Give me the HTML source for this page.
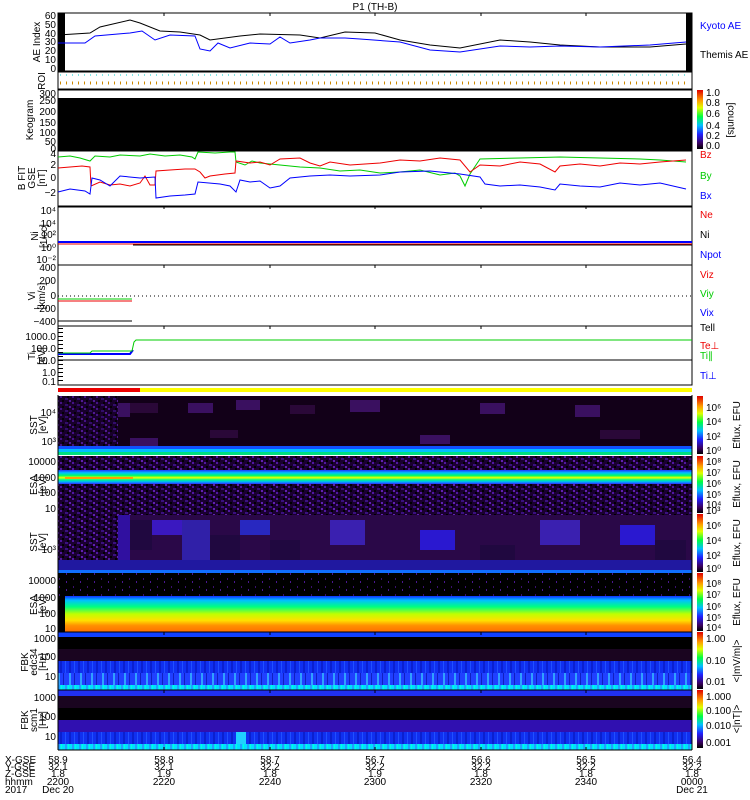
<!DOCTYPE html>
<html><head><meta charset="utf-8"><style>
html,body{margin:0;padding:0;background:#fff;width:750px;height:800px;overflow:hidden}
svg{display:block}
text{font-family:"Liberation Sans",sans-serif;font-size:10px}
</style></head><body>
<svg width="750" height="800" viewBox="0 0 750 800" xmlns="http://www.w3.org/2000/svg">
<defs>
<linearGradient id="rb" x1="0" y1="1" x2="0" y2="0">
<stop offset="0" stop-color="#000"/><stop offset="0.1" stop-color="#3a0060"/><stop offset="0.25" stop-color="#2020ff"/><stop offset="0.4" stop-color="#00c0ff"/><stop offset="0.55" stop-color="#00ff40"/><stop offset="0.7" stop-color="#e0ff00"/><stop offset="0.82" stop-color="#ffa000"/><stop offset="1" stop-color="#e00000"/>
</linearGradient>
<linearGradient id="esa2" x1="0" y1="0" x2="0" y2="1">
<stop offset="0" stop-color="#1030ff"/><stop offset="0.12" stop-color="#00c0ff"/><stop offset="0.3" stop-color="#00ff80"/><stop offset="0.5" stop-color="#c0ff00"/><stop offset="0.68" stop-color="#ffe000"/><stop offset="0.82" stop-color="#ff9000"/><stop offset="1" stop-color="#ff7000"/>
</linearGradient>
<linearGradient id="esa1" x1="0" y1="0" x2="0" y2="1">
<stop offset="0" stop-color="#2030ff"/><stop offset="0.2" stop-color="#00c0ff"/><stop offset="0.4" stop-color="#00ff60"/><stop offset="0.55" stop-color="#f0ff00"/><stop offset="0.7" stop-color="#00ff80"/><stop offset="0.85" stop-color="#00b0ff"/><stop offset="1" stop-color="#3030ff"/>
</linearGradient>
<pattern id="noise" width="12" height="6" patternUnits="userSpaceOnUse">
<rect width="12" height="6" fill="#1a0030"/><rect x="0" y="0" width="2" height="2" fill="#5018a0"/><rect x="5" y="2" width="3" height="2" fill="#3a1080"/><rect x="9" y="4" width="2" height="2" fill="#6020b0"/><rect x="2" y="4" width="2" height="2" fill="#000"/><rect x="7" y="0" width="2" height="2" fill="#000"/>
</pattern>
<pattern id="speck" width="14" height="8" patternUnits="userSpaceOnUse">
<rect width="14" height="8" fill="#000"/><rect x="3" y="2" width="1" height="2" fill="#3a1070"/><rect x="10" y="5" width="1" height="2" fill="#4a1890"/>
</pattern>
<pattern id="vstr" width="9" height="10" patternUnits="userSpaceOnUse">
<rect width="9" height="10" fill="#1030f0"/><rect x="2" width="1" height="10" fill="#2050ff"/><rect x="6" width="2" height="10" fill="#0a20d0"/>
</pattern>
<pattern id="vstr2" width="11" height="10" patternUnits="userSpaceOnUse">
<rect width="11" height="10" fill="#2040ff"/><rect x="3" width="2" height="10" fill="#30a0ff"/><rect x="8" width="1" height="10" fill="#1020c0"/>
</pattern>
<pattern id="cyanstr" width="7" height="10" patternUnits="userSpaceOnUse">
<rect width="7" height="10" fill="#00e0ff"/><rect x="2" width="2" height="10" fill="#20a0ff"/><rect x="5" width="1" height="10" fill="#00ffe0"/>
</pattern>
<pattern id="tk" width="10" height="4" patternUnits="userSpaceOnUse">
<rect width="10" height="1" fill="#000"/>
</pattern>
</defs>

<text x="375" y="10" text-anchor="middle" font-size="11">P1 (TH-B)</text>

<!-- AE panel -->
<rect x="58" y="13" width="634" height="58" fill="#fff" stroke="#000"/>
<rect x="58" y="13" width="7" height="58" fill="#000"/>
<rect x="686" y="13" width="6" height="58" fill="#000"/>
<polyline fill="none" stroke="#000" points="58,35 90,33 100,27 130,20 140,23 160,31 180,32 200,35 210,40 240,36 260,34 300,35 320,38 345,32 375,33 400,40 430,45 460,48 500,40 530,42 560,45 600,47 650,47 686,44"/>
<polyline fill="none" stroke="#00f" points="58,43 85,43 95,36 130,33 142,31 155,40 170,35 195,36 200,49 210,51 218,43 230,48 250,43 270,44 280,37 290,43 310,40 320,38 345,38 360,39 400,42 430,50 460,52 500,46 530,47 560,46 600,47 650,45 686,42"/>
<g text-anchor="end" font-size="9"><text x="56" y="19">60</text><text x="56" y="28">50</text><text x="56" y="37">40</text><text x="56" y="45">30</text><text x="56" y="54">20</text><text x="56" y="63">10</text><text x="56" y="72">0</text></g>
<text transform="translate(40,42) rotate(-90)" text-anchor="middle" font-size="9">AE Index</text>
<text x="700" y="29" fill="#00f" font-size="9">Kyoto AE</text>
<text x="700" y="58" font-size="9">Themis AE</text>

<!-- ROI -->
<rect x="58" y="72" width="634" height="17" fill="#fff" stroke="#000"/>
<line x1="60" y1="75" x2="690" y2="75" stroke="#0cc" stroke-dasharray="1,5"/>
<line x1="60" y1="83" x2="690" y2="83" stroke="#c80" stroke-width="3" stroke-dasharray="1,5"/>
<text transform="translate(45,81) rotate(-90)" text-anchor="middle" font-size="8">ROI</text>

<!-- Keogram -->
<rect x="58" y="90" width="634" height="60" fill="#fff" stroke="#000"/>
<rect x="58" y="98" width="634" height="52" fill="#000"/>
<g text-anchor="end" font-size="9"><text x="56" y="97">300</text><text x="56" y="104">250</text><text x="56" y="115">200</text><text x="56" y="126">150</text><text x="56" y="136">100</text><text x="56" y="145">50</text><text x="56" y="152">0</text></g>
<text transform="translate(33,120) rotate(-90)" text-anchor="middle" font-size="9">Keogram</text>
<rect x="697" y="90" width="6" height="59" fill="url(#rb)"/>
<g font-size="8"><text x="706" y="96">1.0</text><text x="706" y="106">0.8</text><text x="706" y="117">0.6</text><text x="706" y="129">0.4</text><text x="706" y="139">0.2</text><text x="706" y="149">0.0</text></g>
<text transform="translate(728,120) rotate(90)" text-anchor="middle" font-size="8">[counts]</text>

<!-- B panel -->
<rect x="58" y="151" width="634" height="55" fill="#fff" stroke="#000"/>
<polyline fill="none" stroke="#0c0" points="58,157 70,156 80,158 90,161 95,156 110,157 120,155 140,156 150,154 165,156 180,155 192,157 195,159 198,152 215,153 230,152 235,152 236,162 245,165 252,161 260,163 270,164 280,165 300,167 320,168 340,171 360,170 380,173 400,172 420,170 440,175 455,173 460,176 465,186 470,174 480,159 520,158 560,157 600,158 640,159 660,160 686,162"/>
<polyline fill="none" stroke="#e00" points="58,168 70,167 82,166 90,167 91,186 100,182 110,185 120,184 130,186 140,183 145,176 150,185 155,185 156,171 170,170 185,169 195,169 200,172 205,178 210,176 225,174 235,173 236,161 250,163 260,162 270,165 280,159 300,158 310,163 320,166 330,162 350,165 380,163 400,160 420,161 440,158 460,160 470,172 480,165 500,166 520,162 540,164 555,172 560,166 580,164 600,166 620,163 640,164 660,162 686,160"/>
<polyline fill="none" stroke="#00f" points="58,192 70,189 85,191 90,194 92,178 100,180 110,186 120,176 140,178 155,177 156,198 170,196 185,195 195,194 198,182 220,184 230,186 236,192 240,180 250,182 260,181 270,188 280,186 290,178 310,176 330,175 350,176 380,175 400,172 430,171 460,174 480,177 485,184 500,186 520,185 540,187 555,190 560,184 580,186 600,187 620,183 640,185 660,183 686,189"/>
<g text-anchor="end" font-size="9"><text x="56" y="157">4</text><text x="56" y="168">2</text><text x="56" y="181">0</text><text x="56" y="196">−2</text></g>
<text transform="translate(25,178) rotate(-90)" text-anchor="middle" font-size="8">B FIT</text>
<text transform="translate(35,178) rotate(-90)" text-anchor="middle" font-size="8">GSE</text>
<text transform="translate(45,178) rotate(-90)" text-anchor="middle" font-size="8">[nT]</text>
<text x="700" y="158" fill="#e00" font-size="9">Bz</text>
<text x="700" y="179" fill="#0c0" font-size="9">By</text>
<text x="700" y="199" fill="#00f" font-size="9">Bx</text>

<!-- N panel -->
<rect x="58" y="207" width="634" height="58" fill="#fff" stroke="#000"/>
<line x1="58" y1="242" x2="692" y2="242" stroke="#00f" stroke-width="2"/>
<line x1="58" y1="244" x2="692" y2="244" stroke="#e00"/>
<line x1="133" y1="245" x2="692" y2="245" stroke="#000"/>
<g text-anchor="end" font-size="8"><text x="56" y="214">10⁴</text><text x="56" y="227">10⁴</text><text x="56" y="238">10²</text><text x="56" y="251">10⁰</text><text x="56" y="263">10⁻²</text></g>
<text transform="translate(38,236) rotate(-90)" text-anchor="middle" font-size="8">Ni</text>
<text transform="translate(47,236) rotate(-90)" text-anchor="middle" font-size="8">[1/cc]</text>
<text x="700" y="218" fill="#e00" font-size="9">Ne</text>
<text x="700" y="238" font-size="9">Ni</text>
<text x="700" y="258" fill="#00f" font-size="9">Npot</text>

<!-- V panel -->
<rect x="58" y="265" width="634" height="61" fill="#fff" stroke="#000"/>
<line x1="58" y1="296" x2="692" y2="296" stroke="#000" stroke-dasharray="1,3"/>
<line x1="58" y1="299" x2="132" y2="299" stroke="#0c0"/>
<line x1="58" y1="301" x2="132" y2="301" stroke="#e00"/>
<line x1="58" y1="321" x2="132" y2="321" stroke="#000"/>
<g text-anchor="end" font-size="8"><text x="56" y="271">400</text><text x="56" y="284">200</text><text x="56" y="299">0</text><text x="56" y="312">−200</text><text x="56" y="325">−400</text></g>
<text transform="translate(35,296) rotate(-90)" text-anchor="middle" font-size="8">Vi</text>
<text transform="translate(45,296) rotate(-90)" text-anchor="middle" font-size="8">[km/s]</text>
<text x="700" y="278" fill="#e00" font-size="9">Viz</text>
<text x="700" y="297" fill="#0c0" font-size="9">Viy</text>
<text x="700" y="316" fill="#00f" font-size="9">Vix</text>
<text x="700" y="331" font-size="9">Tell</text>

<!-- T panel -->
<rect x="58" y="326" width="634" height="59" fill="#fff" stroke="#000"/>
<polyline fill="none" stroke="#00f" stroke-width="2" points="58,354 130,354 133,350"/>
<polyline fill="none" stroke="#0c0" points="58,353 90,353 92,351 132,351 134,342 136,340 692,340"/>
<line x1="58" y1="360" x2="692" y2="360" stroke="#000"/>
<rect x="58" y="328" width="5" height="55" fill="url(#tk)"/>
<g text-anchor="end" font-size="8"><text x="56" y="340">1000.0</text><text x="56" y="352">100.0</text><text x="56" y="364">10.0</text><text x="56" y="376">1.0</text><text x="56" y="385">0.1</text></g>
<text transform="translate(35,356) rotate(-90)" text-anchor="middle" font-size="8">Ti</text>
<text transform="translate(45,356) rotate(-90)" text-anchor="middle" font-size="8">[eV]</text>
<text x="700" y="349" fill="#e00" font-size="9">Te⊥</text>
<text x="700" y="359" fill="#0c0" font-size="9">Ti∥</text>
<text x="700" y="379" fill="#00f" font-size="9">Ti⊥</text>

<!-- mode bar -->
<rect x="58" y="388" width="82" height="4" fill="#e00"/>
<rect x="140" y="388" width="552" height="4" fill="#ff0"/>

<!-- SST 1 -->
<rect x="58" y="396" width="634" height="50" fill="#120018"/>
<rect x="58" y="396" width="60" height="50" fill="url(#noise)" opacity="0.8"/>
<rect x="118" y="403" width="12" height="14" fill="#3a1060"/>
<rect x="130" y="403" width="28" height="10" fill="#2a0838"/>
<rect x="188" y="403" width="25" height="10" fill="#3a1060"/>
<rect x="236" y="400" width="24" height="10" fill="#3a1060"/>
<rect x="290" y="405" width="25" height="9" fill="#2a0838"/>
<rect x="350" y="400" width="30" height="12" fill="#3a1060"/>
<rect x="480" y="403" width="25" height="11" fill="#3a1060"/>
<rect x="575" y="405" width="25" height="12" fill="#3a1060"/>
<rect x="130" y="438" width="28" height="8" fill="#3a1060"/>
<rect x="210" y="430" width="28" height="8" fill="#2a0838"/>
<rect x="420" y="435" width="30" height="9" fill="#3a1060"/>
<rect x="600" y="430" width="40" height="9" fill="#2a0838"/>
<rect x="58" y="446" width="634" height="3" fill="#1050ff"/>
<rect x="58" y="449" width="634" height="3" fill="#00c0ff"/>
<rect x="58" y="452" width="634" height="3" fill="#00e080"/>
<text transform="translate(37,425) rotate(-90)" text-anchor="middle" font-size="8">SST</text>
<text transform="translate(46,425) rotate(-90)" text-anchor="middle" font-size="7">[eV]</text>
<g text-anchor="end" font-size="9"><text x="56" y="416">10⁴</text><text x="56" y="445">10³</text></g>

<!-- ESA 1 -->
<rect x="58" y="456" width="634" height="14" fill="url(#noise)"/>
<rect x="58" y="470" width="634" height="14" fill="url(#esa1)"/>
<rect x="65" y="477" width="68" height="2" fill="#ffa000"/>
<rect x="58" y="484" width="634" height="31" fill="url(#noise)"/>
<text transform="translate(37,485) rotate(-90)" text-anchor="middle" font-size="8">ESA</text>
<text transform="translate(46,485) rotate(-90)" text-anchor="middle" font-size="7">[eV]</text>
<g text-anchor="end" font-size="9"><text x="56" y="465">10000</text><text x="56" y="481">1000</text><text x="56" y="496">100</text><text x="56" y="512">10</text></g>

<!-- SST 2 -->
<rect x="58" y="515" width="634" height="55" fill="#2a0848"/>
<rect x="58" y="515" width="60" height="55" fill="url(#noise)"/>
<rect x="118" y="515" width="12" height="55" fill="#3010a0"/>
<rect x="130" y="520" width="22" height="30" fill="#200840"/>
<rect x="152" y="520" width="30" height="15" fill="#3a18c0"/>
<rect x="182" y="520" width="28" height="40" fill="#3020a8"/>
<rect x="210" y="535" width="30" height="25" fill="#200840"/>
<rect x="240" y="520" width="30" height="15" fill="#2828c0"/>
<rect x="270" y="540" width="30" height="20" fill="#200840"/>
<rect x="330" y="520" width="35" height="25" fill="#3a20b0"/>
<rect x="420" y="530" width="35" height="20" fill="#2a18d0"/>
<rect x="480" y="545" width="35" height="15" fill="#200840"/>
<rect x="540" y="520" width="40" height="25" fill="#3a20b0"/>
<rect x="620" y="525" width="35" height="20" fill="#2a18d0"/>
<rect x="655" y="540" width="31" height="20" fill="#200840"/>
<rect x="58" y="560" width="634" height="10" fill="#2018a0"/>
<rect x="58" y="570" width="634" height="3" fill="#1070ff"/>
<text transform="translate(37,542) rotate(-90)" text-anchor="middle" font-size="8">SST</text>
<text transform="translate(46,542) rotate(-90)" text-anchor="middle" font-size="7">[eV]</text>
<g text-anchor="end" font-size="9"><text x="56" y="553">10³</text></g>

<!-- ESA 2 -->
<rect x="58" y="573" width="634" height="23" fill="url(#speck)"/>
<rect x="58" y="596" width="634" height="36" fill="url(#esa2)"/>
<rect x="58" y="596" width="7" height="36" fill="#000"/>
<text transform="translate(37,605) rotate(-90)" text-anchor="middle" font-size="8">ESA</text>
<text transform="translate(46,605) rotate(-90)" text-anchor="middle" font-size="7">[eV]</text>
<g text-anchor="end" font-size="9"><text x="56" y="584">10000</text><text x="56" y="601">1000</text><text x="56" y="617">100</text><text x="56" y="632">10</text></g>

<!-- FBK 1 -->
<rect x="58" y="632" width="634" height="5" fill="#1040ff"/>
<line x1="58" y1="632" x2="692" y2="632" stroke="#000"/>
<rect x="58" y="637" width="634" height="12" fill="#000"/>
<rect x="58" y="649" width="634" height="12" fill="#1a0520"/>
<rect x="58" y="661" width="634" height="12" fill="url(#vstr)"/>
<rect x="58" y="673" width="634" height="12" fill="url(#vstr2)"/>
<rect x="58" y="685" width="634" height="5" fill="url(#cyanstr)"/>
<text transform="translate(28,662) rotate(-90)" text-anchor="middle" font-size="8">FBK</text>
<text transform="translate(37,662) rotate(-90)" text-anchor="middle" font-size="7">edc34</text>
<text transform="translate(46,662) rotate(-90)" text-anchor="middle" font-size="7">[Hz]</text>
<g text-anchor="end" font-size="9"><text x="56" y="642">1000</text><text x="56" y="660">100</text><text x="56" y="680">10</text></g>

<!-- FBK 2 -->
<rect x="58" y="690" width="634" height="6" fill="#2030f0"/>
<line x1="58" y1="690" x2="692" y2="690" stroke="#000"/>
<rect x="58" y="696" width="634" height="12" fill="#1a0520"/>
<rect x="58" y="708" width="634" height="12" fill="#000"/>
<rect x="58" y="720" width="634" height="12" fill="#3010b0"/>
<rect x="58" y="732" width="634" height="12" fill="url(#vstr)"/>
<rect x="236" y="732" width="10" height="12" fill="#20d0ff"/>
<rect x="58" y="744" width="634" height="6" fill="url(#cyanstr)"/>
<line x1="58" y1="750" x2="692" y2="750" stroke="#000"/>
<text transform="translate(28,720) rotate(-90)" text-anchor="middle" font-size="8">FBK</text>
<text transform="translate(37,720) rotate(-90)" text-anchor="middle" font-size="7">scm1</text>
<text transform="translate(46,720) rotate(-90)" text-anchor="middle" font-size="7">[Hz]</text>
<g text-anchor="end" font-size="9"><text x="56" y="701">1000</text><text x="56" y="720">100</text><text x="56" y="740">10</text></g>

<!-- frame -->
<line x1="692" y1="395" x2="692" y2="750" stroke="#000"/>
<line x1="58" y1="395" x2="58" y2="750" stroke="#000"/>
<!-- x ticks -->
<g stroke="#000">
<path d="M164,13v3M270,13v3M375,13v3M481,13v3M586,13v3M164,206v3M270,206v3M375,206v3M481,206v3M586,206v3M164,265v3M270,265v3M375,265v3M481,265v3M586,265v3M164,326v3M270,326v3M375,326v3M481,326v3M586,326v3M164,632v3M270,632v3M375,632v3M481,632v3M586,632v3M164,690v3M270,690v3M375,690v3M481,690v3M586,690v3M164,750v-3M270,750v-3M375,750v-3M481,750v-3M586,750v-3"/>
</g>

<!-- colorbars -->
<g>
<rect x="697" y="396" width="6" height="58" fill="url(#rb)"/>
<rect x="697" y="456" width="6" height="57" fill="url(#rb)"/>
<rect x="697" y="514" width="6" height="58" fill="url(#rb)"/>
<rect x="697" y="573" width="6" height="58" fill="url(#rb)"/>
<rect x="697" y="632" width="6" height="57" fill="url(#rb)"/>
<rect x="697" y="690" width="6" height="58" fill="url(#rb)"/>
</g>
<g font-size="8">
<text x="706" y="411">10⁶</text><text x="706" y="425">10⁴</text><text x="706" y="440">10²</text><text x="706" y="454">10⁰</text>
<text x="706" y="465">10⁸</text><text x="706" y="476">10⁷</text><text x="706" y="487">10⁶</text><text x="706" y="498">10⁵</text><text x="706" y="508">10⁴</text><text x="706" y="514">10³</text>
<text x="706" y="529">10⁶</text><text x="706" y="544">10⁴</text><text x="706" y="559">10²</text><text x="706" y="572">10⁰</text>
<text x="706" y="587">10⁸</text><text x="706" y="598">10⁷</text><text x="706" y="610">10⁶</text><text x="706" y="621">10⁵</text><text x="706" y="631">10⁴</text>
<text x="706" y="642">1.00</text><text x="706" y="664">0.10</text><text x="706" y="685">0.01</text>
<text x="706" y="700">1.000</text><text x="706" y="714">0.100</text><text x="706" y="729">0.010</text><text x="706" y="746">0.001</text>
</g>
<g font-size="8" text-anchor="middle">
<text transform="translate(740,425) rotate(-90)">Eflux, EFU</text>
<text transform="translate(740,484) rotate(-90)">Eflux, EFU</text>
<text transform="translate(740,543) rotate(-90)">Eflux, EFU</text>
<text transform="translate(740,602) rotate(-90)">Eflux, EFU</text>
<text transform="translate(740,661) rotate(-90)">&lt;|mV/m|&gt;</text>
<text transform="translate(740,719) rotate(-90)">&lt;|nT|&gt;</text>
</g>

<!-- time axis labels -->
<g font-size="9">
<text x="5" y="763">X-GSE</text><text x="5" y="770">Y-GSE</text><text x="5" y="777">Z-GSE</text><text x="5" y="785">hhmm</text><text x="5" y="793">2017</text>
</g>
<g font-size="9" text-anchor="middle">
<text x="58" y="763">58.9</text><text x="58" y="770">32.1</text><text x="58" y="777">1.8</text><text x="58" y="785">2200</text><text x="58" y="793">Dec 20</text>
<text x="164" y="763">58.8</text><text x="164" y="770">32.1</text><text x="164" y="777">1.9</text><text x="164" y="785">2220</text>
<text x="270" y="763">58.7</text><text x="270" y="770">32.2</text><text x="270" y="777">1.8</text><text x="270" y="785">2240</text>
<text x="375" y="763">56.7</text><text x="375" y="770">32.2</text><text x="375" y="777">1.9</text><text x="375" y="785">2300</text>
<text x="481" y="763">56.6</text><text x="481" y="770">32.2</text><text x="481" y="777">1.8</text><text x="481" y="785">2320</text>
<text x="586" y="763">56.5</text><text x="586" y="770">32.2</text><text x="586" y="777">1.8</text><text x="586" y="785">2340</text>
<text x="692" y="763">56.4</text><text x="692" y="770">32.2</text><text x="692" y="777">1.8</text><text x="692" y="785">0000</text><text x="692" y="793">Dec 21</text>
</g>
</svg>
</body></html>
